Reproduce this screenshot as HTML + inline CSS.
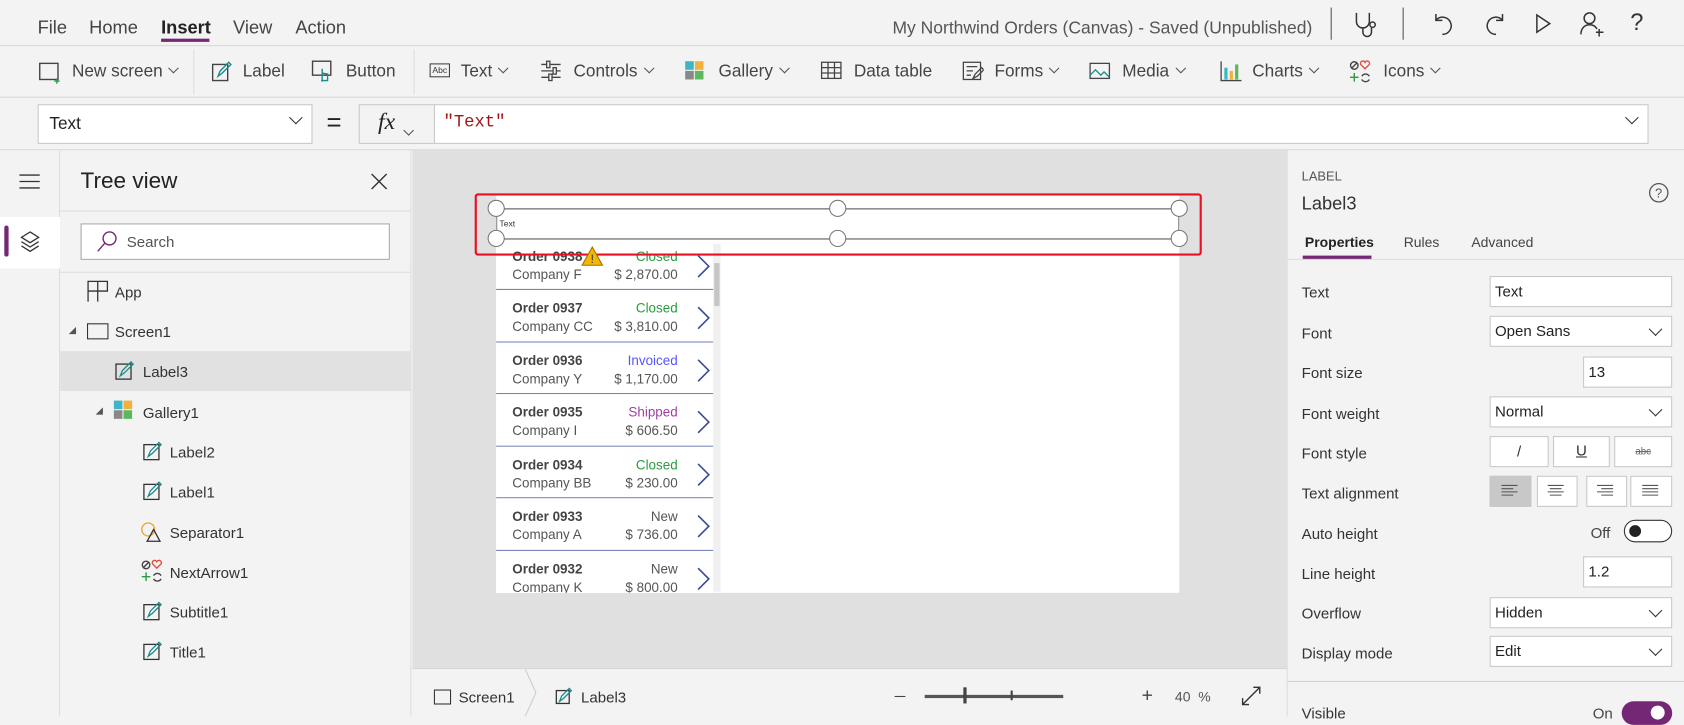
<!DOCTYPE html>
<html><head><meta charset="utf-8"><style>
*{box-sizing:border-box;margin:0;padding:0}
html,body{width:1684px;height:716px;overflow:hidden;background:#f3f3f3}
#s{position:absolute;left:0;top:0;width:1568px;height:667px;transform:scale(1.07398);transform-origin:0 0;font-family:"Liberation Sans",sans-serif;color:#333;background:#f3f3f3}
.a{position:absolute}
.t{position:absolute;white-space:nowrap}
.m{font-size:17px;color:#444;top:16px}
.r{font-size:16px;color:#444;top:58px}
.ic{position:absolute}
.tree{font-size:14px;color:#333}
.pl{font-size:14px;color:#333;left:1212px}
.inp{position:absolute;background:#fff;border:1px solid #c8c8c8;height:29px;font-size:14px;padding:5px 4px;color:#222}
.dd::after{content:"";position:absolute;right:10px;top:7px;width:8px;height:8px;border-right:1.3px solid #333;border-bottom:1.3px solid #333;transform:rotate(45deg)}
.row{position:absolute;left:462px;width:203px;height:48.5px;border-bottom:1px solid #6c7bb3;background:#fff}
.row .o{position:absolute;left:15px;top:10px;font-size:12.5px;font-weight:bold;color:#444}
.row .c{position:absolute;left:15px;top:27px;font-size:12.5px;color:#555}
.row .st{position:absolute;right:34px;top:10px;font-size:12.5px}
.row .p{position:absolute;right:34px;top:27px;font-size:12.5px;color:#555}
.row svg{position:absolute;right:3px;top:15px}
.h{position:absolute;width:16px;height:16px;border-radius:50%;background:#fff;border:1px solid #777}
.chev{display:inline-block;width:7px;height:7px;border-right:1.2px solid #555;border-bottom:1.2px solid #555;transform:rotate(45deg);margin-left:7px;position:relative;top:-4px}
.btn{position:absolute;background:#fff;border:1px solid #c8c8c8;height:29px;top:406px}
</style></head><body><div id="s">
<div class="t m" style="left:35px">File</div>
<div class="t m" style="left:83px">Home</div>
<div class="t m" style="left:150px;font-weight:bold;color:#222">Insert</div>
<div class="a" style="left:150px;top:36px;width:45px;height:3px;background:#742774"></div>
<div class="t m" style="left:217px">View</div>
<div class="t m" style="left:275px">Action</div>
<div class="t m" style="left:831px;color:#555;font-size:16.3px;top:17px">My Northwind Orders (Canvas) - Saved (Unpublished)</div>
<div class="a" style="left:1239px;top:7px;width:1px;height:30px;background:#555"></div>
<div class="a" style="left:1306px;top:7px;width:1px;height:30px;background:#555"></div>
<svg class="ic" style="left:1260px;top:10px" width="24" height="26" fill="none" stroke="#333" stroke-width="1.4"><path d="M3 2v8a6 6 0 0 0 12 0V2M9 16v4a4 4 0 0 0 8 0v-4"/><circle cx="18" cy="13" r="2.5"/></svg>
<svg class="ic" style="left:1334px;top:10px" width="22" height="24" fill="none" stroke="#333" stroke-width="1.4"><path d="M3 3v6h6M3 9a8 8 0 1 1 6 13"/></svg>
<svg class="ic" style="left:1380px;top:10px" width="22" height="24" fill="none" stroke="#333" stroke-width="1.4"><path d="M19 3v6h-6M19 9a8 8 0 1 0 -6 13"/></svg>
<svg class="ic" style="left:1428px;top:12px" width="18" height="20" fill="none" stroke="#333" stroke-width="1.4"><path d="M3 2l12 8-12 8z"/></svg>
<svg class="ic" style="left:1470px;top:10px" width="26" height="26" fill="none" stroke="#333" stroke-width="1.4"><circle cx="10" cy="7" r="5"/><path d="M2 22c0-6 4-9 8-9s6 2 7 4M19 17v7M16 20h7"/></svg>
<div class="t" style="left:1518px;top:8px;font-size:22px;color:#333">?</div>
<div class="a" style="left:0;top:42px;width:1568px;height:1px;background:#d6d6d6"></div>
<svg class="ic" style="left:36px;top:57px" width="22" height="22" fill="none" stroke="#444" stroke-width="1.3"><rect x="1" y="2" width="17" height="15"/><path d="M17 16v5M14.5 18.5h5" stroke="#2a9d3e"/></svg>
<div class="t r" style="left:67px">New screen<span class="chev"></span></div>
<div class="a" style="left:180px;top:46px;width:1px;height:42px;background:#ddd"></div>
<svg class="ic" style="left:197px;top:57px" width="20" height="20" fill="none" stroke="#444" stroke-width="1.3"><rect x="1" y="3" width="14" height="15"/><path d="M6 14l2-5 8-8 2 2-8 8z" stroke="#1a8a8a"/></svg>
<div class="t r" style="left:226px">Label</div>
<svg class="ic" style="left:290px;top:56px" width="22" height="22" fill="none" stroke="#444" stroke-width="1.3"><rect x="1" y="1" width="17" height="13"/><path d="M10 8v12M10 12l5 1v6h-6" stroke="#1a8a8a"/></svg>
<div class="t r" style="left:322px">Button</div>
<div class="a" style="left:385px;top:46px;width:1px;height:42px;background:#ddd"></div>
<div class="a" style="left:400px;top:59px;width:19px;height:13px;border:1px solid #444;font-size:8px;line-height:11px;text-align:center">Abc</div>
<div class="t r" style="left:429px">Text<span class="chev"></span></div>
<svg class="ic" style="left:503px;top:56px" width="20" height="20" fill="none" stroke="#444" stroke-width="1.2"><path d="M1 4h18M1 10h18M1 16h18"/><rect x="6" y="1" width="3" height="6" fill="#f3f3f3"/><rect x="12" y="7" width="3" height="6" fill="#f3f3f3"/><rect x="8" y="13" width="3" height="6" fill="#f3f3f3"/></svg>
<div class="t r" style="left:534px">Controls<span class="chev"></span></div>
<div class="a" style="left:638px;top:57px;width:8px;height:8px;background:#3fb6c6"></div><div class="a" style="left:647px;top:57px;width:8px;height:8px;background:#f0b23c"></div>
<div class="a" style="left:638px;top:66px;width:8px;height:8px;background:#888"></div><div class="a" style="left:647px;top:66px;width:8px;height:8px;background:#5cb85c"></div>
<div class="t r" style="left:669px">Gallery<span class="chev"></span></div>
<svg class="ic" style="left:764px;top:57px" width="20" height="17" fill="none" stroke="#444" stroke-width="1.2"><rect x="1" y="1" width="18" height="15"/><path d="M1 6h18M1 11h18M7 1v15M13 1v15"/></svg>
<div class="t r" style="left:795px">Data table</div>
<svg class="ic" style="left:896px;top:57px" width="20" height="20" fill="none" stroke="#444" stroke-width="1.2"><rect x="1" y="1" width="16" height="16"/><path d="M4 5h10M4 9h6M4 13h4M10 16l2-4 6-6 2 2-6 6z"/></svg>
<div class="t r" style="left:926px">Forms<span class="chev"></span></div>
<svg class="ic" style="left:1014px;top:58px" width="20" height="16" fill="none" stroke="#444" stroke-width="1.2"><rect x="1" y="1" width="18" height="14"/><path d="M1 12l5-5 5 5 3-3 5 5" stroke="#1a8a8a"/></svg>
<div class="t r" style="left:1045px">Media<span class="chev"></span></div>
<svg class="ic" style="left:1136px;top:57px" width="20" height="19"><path d="M1 0v18h19" stroke="#444" fill="none" stroke-width="1.2"/><rect x="4" y="6" width="3" height="11" fill="#3fb6c6"/><rect x="9" y="9" width="3" height="8" fill="#f0b23c"/><rect x="14" y="3" width="3" height="14" fill="#5cb85c"/></svg>
<div class="t r" style="left:1166px">Charts<span class="chev"></span></div>
<svg class="ic" style="left:1256px;top:56px" width="22" height="22" fill="none" stroke-width="1.3"><circle cx="5" cy="5" r="3.5" stroke="#444"/><path d="M2.5 7.5l5-5" stroke="#444"/><path d="M15 8l-4-4a2 2 0 0 1 4-2 2 2 0 0 1 4 2z" stroke="#e74c3c"/><path d="M5 12v8M1 16h8" stroke="#2a9d3e"/><path d="M12 15a4 4 0 0 1 7 0M19 18a4 4 0 0 1-7 0" stroke="#444"/></svg>
<div class="t r" style="left:1288px">Icons<span class="chev"></span></div>
<div class="a" style="left:0;top:90px;width:1568px;height:1px;background:#d6d6d6"></div>
<div class="inp dd" style="left:35px;top:97px;width:256px;height:37px;padding:9px 10px;font-size:16px">Text</div>
<div class="t" style="left:304px;top:101px;font-size:24px;color:#222">=</div>
<div class="a" style="left:334px;top:97px;width:71px;height:37px;border:1px solid #c8c8c8;background:#f3f3f3"></div>
<div class="t" style="left:352px;top:100px;font-size:22px;font-style:italic;font-family:'Liberation Serif',serif;color:#222">fx</div>
<span class="a chev" style="left:370px;top:112px"></span>
<div class="inp dd" style="left:404px;top:97px;width:1131px;height:37px;padding:7px 8px;font-size:16px;font-family:'Liberation Mono',monospace;color:#a31515">"Text"</div>
<div class="a" style="left:0;top:139px;width:1568px;height:1px;background:#d6d6d6"></div>
<div class="a" style="left:0;top:140px;width:56px;height:527px;background:#f3f3f3;border-right:1px solid #ddd"></div>
<svg class="ic" style="left:18px;top:161px" width="20" height="16" stroke="#333" stroke-width="1.2"><path d="M0 2h19M0 8h19M0 14h19"/></svg>
<div class="a" style="left:0;top:202px;width:56px;height:48px;background:#fff"></div>
<div class="a" style="left:4px;top:210px;width:4px;height:29px;background:#742774;border-radius:2px"></div>
<svg class="ic" style="left:18px;top:215px" width="20" height="20" fill="none" stroke="#333" stroke-width="1.2"><path d="M10 1l8 5-8 5-8-5z M2 10l8 5 8-5M2 14l8 5 8-5"/></svg>
<div class="a" style="left:56px;top:140px;width:327px;height:527px;background:#f3f3f3;border-right:1px solid #ddd"></div>
<div class="t" style="left:75px;top:157px;font-size:21px;color:#222">Tree view</div>
<svg class="ic" style="left:345px;top:161px" width="16" height="16" stroke="#333" stroke-width="1.3"><path d="M1 1l14 14M15 1L1 15"/></svg>
<div class="a" style="left:56px;top:196px;width:326px;height:1px;background:#ddd"></div>
<div class="a" style="left:75px;top:208px;width:288px;height:34px;background:#fff;border:1px solid #aaa"></div>
<svg class="ic" style="left:89px;top:214px" width="22" height="22" fill="none" stroke="#742774" stroke-width="1.3"><circle cx="13" cy="8" r="6"/><path d="M9 12l-7 8"/></svg>
<div class="t" style="left:118px;top:217px;font-size:14px;color:#555">Search</div>
<div class="a" style="left:56px;top:253px;width:326px;height:1px;background:#ddd"></div>
<div class="a" style="left:56px;top:327px;width:326px;height:37px;background:#e1e1e1"></div>
<svg class="ic" style="left:81px;top:261px" width="20" height="20" fill="none" stroke="#333" stroke-width="1.2"><path d="M1 1h18v9H1zM10 1v19M1 10v10"/></svg>
<div class="t tree" style="left:107px;top:264px">App</div>
<div class="t" style="left:64px;top:302px;font-size:9px;color:#555">◢</div>
<div class="a" style="left:81px;top:301px;width:20px;height:15px;border:1.2px solid #333"></div>
<div class="t tree" style="left:107px;top:301px">Screen1</div>
<svg class="ic" style="left:107px;top:336px" width="19" height="19" fill="none" stroke="#333" stroke-width="1.2"><rect x="1" y="3" width="14" height="14"/><path d="M5 14l2-5 8-8 2 2-8 8z" stroke="#1a8a8a"/></svg>
<div class="t tree" style="left:133px;top:338px">Label3</div>
<div class="t" style="left:89px;top:377px;font-size:9px;color:#555">◢</div>
<div class="a" style="left:106px;top:373px;width:8px;height:8px;background:#3fb6c6"></div><div class="a" style="left:115px;top:373px;width:8px;height:8px;background:#f0b23c"></div>
<div class="a" style="left:106px;top:382px;width:8px;height:8px;background:#888"></div><div class="a" style="left:115px;top:382px;width:8px;height:8px;background:#5cb85c"></div>
<div class="t tree" style="left:133px;top:376px">Gallery1</div>
<svg class="ic" style="left:133px;top:411px" width="19" height="19" fill="none" stroke="#333" stroke-width="1.2"><rect x="1" y="3" width="14" height="14"/><path d="M5 14l2-5 8-8 2 2-8 8z" stroke="#1a8a8a"/></svg>
<div class="t tree" style="left:158px;top:413px">Label2</div>
<svg class="ic" style="left:133px;top:448px" width="19" height="19" fill="none" stroke="#333" stroke-width="1.2"><rect x="1" y="3" width="14" height="14"/><path d="M5 14l2-5 8-8 2 2-8 8z" stroke="#1a8a8a"/></svg>
<div class="t tree" style="left:158px;top:450px">Label1</div>
<svg class="ic" style="left:131px;top:485px" width="22" height="20" fill="none" stroke-width="1.2"><circle cx="7" cy="8" r="6" stroke="#f0a030"/><path d="M12 8l6 11H6z" stroke="#333"/></svg>
<div class="t tree" style="left:158px;top:488px">Separator1</div>
<svg class="ic" style="left:131px;top:521px" width="22" height="22" fill="none" stroke-width="1.3"><circle cx="5" cy="5" r="3.5" stroke="#444"/><path d="M2.5 7.5l5-5" stroke="#444"/><path d="M15 8l-4-4a2 2 0 0 1 4-2 2 2 0 0 1 4 2z" stroke="#e74c3c"/><path d="M5 12v8M1 16h8" stroke="#2a9d3e"/><path d="M12 15a4 4 0 0 1 7 0M19 18a4 4 0 0 1-7 0" stroke="#444"/></svg>
<div class="t tree" style="left:158px;top:525px">NextArrow1</div>
<svg class="ic" style="left:133px;top:560px" width="19" height="19" fill="none" stroke="#333" stroke-width="1.2"><rect x="1" y="3" width="14" height="14"/><path d="M5 14l2-5 8-8 2 2-8 8z" stroke="#1a8a8a"/></svg>
<div class="t tree" style="left:158px;top:562px">Subtitle1</div>
<svg class="ic" style="left:133px;top:597px" width="19" height="19" fill="none" stroke="#333" stroke-width="1.2"><rect x="1" y="3" width="14" height="14"/><path d="M5 14l2-5 8-8 2 2-8 8z" stroke="#1a8a8a"/></svg>
<div class="t tree" style="left:158px;top:599px">Title1</div>
<div class="a" style="left:384px;top:140px;width:814px;height:482px;background:#e0e0e0"></div>
<div class="a" style="left:462px;top:181px;width:636px;height:371px;background:#fff"></div>
<div class="row" style="top:221.5px"><div class="o">Order 0938</div><div class="c">Company F</div><div class="st" style="color:#2a9d3e">Closed</div><div class="p">$ 2,870.00</div><svg width="14" height="22" fill="none" stroke="#3b4a9a" stroke-width="1.5"><path d="M2 1l10 10-10 10"/></svg></div>
<div class="row" style="top:270px"><div class="o">Order 0937</div><div class="c">Company CC</div><div class="st" style="color:#2a9d3e">Closed</div><div class="p">$ 3,810.00</div><svg width="14" height="22" fill="none" stroke="#3b4a9a" stroke-width="1.5"><path d="M2 1l10 10-10 10"/></svg></div>
<div class="row" style="top:318.5px"><div class="o">Order 0936</div><div class="c">Company Y</div><div class="st" style="color:#5555ff">Invoiced</div><div class="p">$ 1,170.00</div><svg width="14" height="22" fill="none" stroke="#3b4a9a" stroke-width="1.5"><path d="M2 1l10 10-10 10"/></svg></div>
<div class="row" style="top:367px"><div class="o">Order 0935</div><div class="c">Company I</div><div class="st" style="color:#a040a0">Shipped</div><div class="p">$ 606.50</div><svg width="14" height="22" fill="none" stroke="#3b4a9a" stroke-width="1.5"><path d="M2 1l10 10-10 10"/></svg></div>
<div class="row" style="top:415.5px"><div class="o">Order 0934</div><div class="c">Company BB</div><div class="st" style="color:#2a9d3e">Closed</div><div class="p">$ 230.00</div><svg width="14" height="22" fill="none" stroke="#3b4a9a" stroke-width="1.5"><path d="M2 1l10 10-10 10"/></svg></div>
<div class="row" style="top:464px"><div class="o">Order 0933</div><div class="c">Company A</div><div class="st" style="color:#555">New</div><div class="p">$ 736.00</div><svg width="14" height="22" fill="none" stroke="#3b4a9a" stroke-width="1.5"><path d="M2 1l10 10-10 10"/></svg></div>
<div class="row" style="top:512.5px;height:39px;overflow:hidden;border:none"><div class="o">Order 0932</div><div class="c">Company K</div><div class="st" style="color:#555">New</div><div class="p">$ 800.00</div><svg width="14" height="22" fill="none" stroke="#3b4a9a" stroke-width="1.5"><path d="M2 1l10 10-10 10"/></svg></div>
<div class="a" style="left:664px;top:227px;width:7px;height:324px;background:#f0f0f0"></div>
<div class="a" style="left:665px;top:245px;width:5px;height:40px;background:#c6c6c6"></div>
<div class="a" style="left:442px;top:180px;width:677px;height:58px;border:2px solid #e81123;border-radius:3px"></div>
<div class="a" style="left:462px;top:194px;width:636px;height:29px;background:#fff;border-top:1px solid #555;border-bottom:1px solid #555"></div>
<div class="t" style="left:465px;top:204px;font-size:8px;color:#333">Text</div>
<div class="a" style="left:462px;top:194px;width:1px;height:29px;background:#888"></div>
<div class="a" style="left:1097px;top:194px;width:1px;height:29px;background:#888"></div>
<div class="h" style="left:454px;top:186px"></div><div class="h" style="left:772px;top:186px"></div><div class="h" style="left:1090px;top:186px"></div>
<div class="h" style="left:454px;top:214px"></div><div class="h" style="left:772px;top:214px"></div><div class="h" style="left:1090px;top:214px"></div>
<svg class="ic" style="left:541px;top:229px" width="21" height="19"><path d="M10.5 1L20 18H1z" fill="#f5b800" stroke="#a07000" stroke-width="1"/><text x="9" y="16" font-size="11" font-family="Liberation Sans" fill="#333">!</text></svg>
<div class="a" style="left:384px;top:622px;width:814px;height:45px;background:#f3f3f3;border-top:1px solid #d6d6d6"></div>
<div class="a" style="left:404px;top:642px;width:16px;height:14px;border:1.2px solid #333"></div>
<div class="t" style="left:427px;top:641px;font-size:14px;color:#333">Screen1</div>
<svg class="ic" style="left:488px;top:623px" width="14" height="44" fill="none" stroke="#ccc"><path d="M1 0l10 22-10 22"/></svg>
<svg class="ic" style="left:517px;top:640px" width="17" height="17" fill="none" stroke="#333" stroke-width="1.2"><rect x="1" y="3" width="12" height="12"/><path d="M4 13l2-5 7-7 2 2-7 7z" stroke="#1a8a8a"/></svg>
<div class="t" style="left:541px;top:641px;font-size:14px;color:#333">Label3</div>
<div class="a" style="left:833px;top:648px;width:10px;height:1px;background:#444"></div>
<div class="a" style="left:861px;top:647px;width:129px;height:3px;background:#555"></div>
<div class="a" style="left:897px;top:640px;width:3px;height:15px;background:#444"></div>
<div class="a" style="left:941px;top:643px;width:2px;height:9px;background:#444"></div>
<div class="t" style="left:1063px;top:637px;font-size:18px;color:#444">+</div>
<div class="t" style="left:1094px;top:641px;font-size:13px;color:#555">40 &nbsp;%</div>
<svg class="ic" style="left:1155px;top:638px" width="20" height="20" fill="none" stroke="#333" stroke-width="1.3"><path d="M2 18L18 2M12 2h6v6M2 12v6h6"/></svg>
<div class="a" style="left:1198px;top:140px;width:370px;height:527px;background:#f3f3f3;border-left:1px solid #ddd"></div>
<div class="t" style="left:1212px;top:157px;font-size:12px;color:#555">LABEL</div>
<div class="t" style="left:1212px;top:180px;font-size:17px;color:#333">Label3</div>
<svg class="ic" style="left:1535px;top:170px" width="19" height="19" fill="none" stroke="#555" stroke-width="1.2"><circle cx="9.5" cy="9.5" r="8.5"/><text x="6" y="14" font-size="12" fill="#555" stroke="none" font-family="Liberation Sans">?</text></svg>
<div class="t" style="left:1215px;top:218px;font-size:13px;font-weight:bold;color:#222">Properties</div>
<div class="a" style="left:1213px;top:238px;width:64px;height:4px;background:#742774"></div>
<div class="t" style="left:1307px;top:218px;font-size:13px;color:#444">Rules</div>
<div class="t" style="left:1370px;top:218px;font-size:13px;color:#444">Advanced</div>
<div class="a" style="left:1199px;top:241px;width:369px;height:1px;background:#ddd"></div>
<div class="t pl" style="top:264px">Text</div><div class="inp" style="left:1387px;top:257px;width:170px">Text</div>
<div class="t pl" style="top:302px">Font</div><div class="inp dd" style="left:1387px;top:294px;width:170px">Open Sans</div>
<div class="t pl" style="top:339px">Font size</div><div class="inp" style="left:1474px;top:332px;width:83px">13</div>
<div class="t pl" style="top:377px">Font weight</div><div class="inp dd" style="left:1387px;top:369px;width:170px">Normal</div>
<div class="t pl" style="top:414px">Font style</div>
<div class="btn" style="left:1387px;width:55px;text-align:center;font-size:14px;padding-top:5px">/</div>
<div class="btn" style="left:1446px;width:53px;text-align:center;font-size:14px;padding-top:4px;text-decoration:underline">U</div>
<div class="btn" style="left:1503px;width:54px;text-align:center;font-size:9px;padding-top:8px;text-decoration:line-through;color:#666">abc</div>
<div class="t pl" style="top:451px">Text alignment</div>
<div class="btn" style="left:1387px;top:443px;width:39px;background:#c8c8c8"></div>
<div class="btn" style="left:1431px;top:443px;width:38px"></div>
<div class="btn" style="left:1477px;top:443px;width:38px"></div>
<div class="btn" style="left:1518px;top:443px;width:39px"></div>
<svg class="ic" style="left:1398px;top:451px" width="16" height="12" stroke="#555"><path d="M0 1h15M0 4h11M0 7h15M0 10h11"/></svg>
<svg class="ic" style="left:1441px;top:451px" width="16" height="12" stroke="#555"><path d="M0 1h15M2 4h11M0 7h15M2 10h11"/></svg>
<svg class="ic" style="left:1487px;top:451px" width="16" height="12" stroke="#555"><path d="M0 1h15M4 4h11M0 7h15M4 10h11"/></svg>
<svg class="ic" style="left:1529px;top:451px" width="16" height="12" stroke="#555"><path d="M0 1h15M0 4h15M0 7h15M0 10h15"/></svg>
<div class="t pl" style="top:489px">Auto height</div>
<div class="t" style="left:1481px;top:488px;font-size:14px;color:#444">Off</div>
<div class="a" style="left:1512px;top:484px;width:45px;height:21px;border:1px solid #333;border-radius:11px;background:#fff"></div>
<div class="a" style="left:1517px;top:489px;width:11px;height:11px;border-radius:50%;background:#222"></div>
<div class="t pl" style="top:526px">Line height</div><div class="inp" style="left:1474px;top:518px;width:83px">1.2</div>
<div class="t pl" style="top:563px">Overflow</div><div class="inp dd" style="left:1387px;top:556px;width:170px">Hidden</div>
<div class="t pl" style="top:600px">Display mode</div><div class="inp dd" style="left:1387px;top:592px;width:170px">Edit</div>
<div class="a" style="left:1199px;top:634px;width:369px;height:1px;background:#d0d0d0"></div>
<div class="t pl" style="top:656px">Visible</div>
<div class="t" style="left:1483px;top:656px;font-size:14px;color:#444">On</div>
<div class="a" style="left:1510px;top:653px;width:47px;height:22px;border-radius:11px;background:#742774"></div>
<div class="a" style="left:1537px;top:657px;width:13px;height:13px;border-radius:50%;background:#fff"></div>
</div></body></html>
